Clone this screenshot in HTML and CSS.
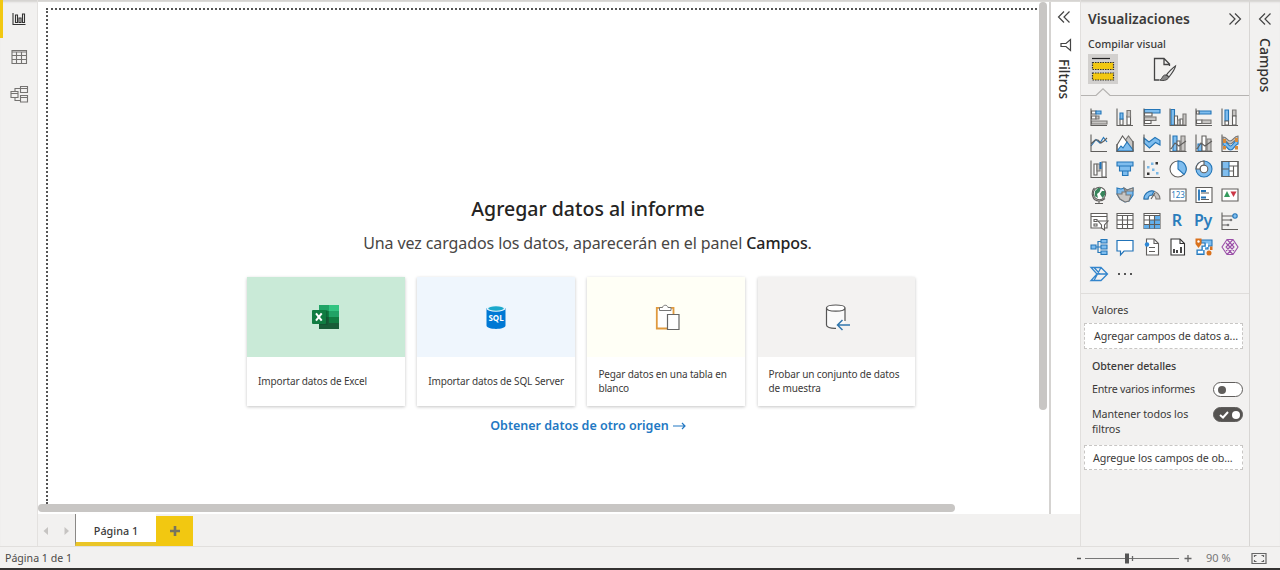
FILE: index.html
```html
<!DOCTYPE html>
<html lang="es">
<head>
<meta charset="utf-8">
<title>Informe</title>
<link rel="stylesheet" href="styles.css">
</head>
<body>
<div class="app">
  <div class="workspace">
    <nav class="views">
      <div class="view active"><svg width="20" height="20" viewBox="0 0 20 20"><path class="vk" d="M4 4V15.500H16.500M6.500 13.500V6H8.500V13.500ZM10 13.500V9H12V13.500ZM13.500 13.500V5H15.500V13.500Z"/></svg></div>
      <div class="view"><svg width="20" height="20" viewBox="0 0 20 20"><path class="vg" d="M3 3.500H17.500V16.500H3ZM3 5H17.500M3 8.500H17.500M3 12.500H17.500M7.500 5V16.500M12.500 5V16.500"/></svg></div>
      <div class="view"><svg width="20" height="20" viewBox="0 0 20 20"><path class="vg" d="M2 7.500H9V13.500H2ZM2 9.500H9M11.500 2.500H18.500V8.500H11.500ZM11.500 4.500H18.500M11.500 11.500H18.500V18H11.500ZM11.500 13.500H18.500M6 7.500V4.500H11.500M6 13.500V16.500H11.500"/></svg></div>
    </nav>
    <div class="center">
      <div class="stage">
        <main class="canvas">
          <div class="report">
            <h1>Agregar datos al informe</h1>
            <p class="lead">Una vez cargados los datos, aparecerán en el panel <b>Campos</b>.</p>
            <div class="cards">
              <div class="card"><div class="pic green"><svg width="30" height="28" viewBox="0 0 30 28">
                <rect x="8" y="2" width="10" height="6" fill="#21a366"/><rect x="18" y="2" width="10" height="6" fill="#33c481"/><rect x="8" y="8" width="10" height="6" fill="#107c41"/><rect x="18" y="8" width="10" height="6" fill="#21a366"/><rect x="8" y="14" width="10" height="6" fill="#185c37"/><rect x="18" y="14" width="10" height="6" fill="#107c41"/><rect x="8" y="20" width="20" height="6" fill="#185c37"/><rect x="8" y="7" width="8.500" height="15" fill="#0b4d2c" opacity=".45"/><rect x="1" y="7" width="14" height="14" rx="1" fill="#107c41"/><path d="M5 10.300L10.700 17.700M10.700 10.300L5 17.700" stroke="#fff" stroke-width="2"/></svg></div><div class="label">Importar datos de Excel</div></div>
              <div class="card"><div class="pic blue"><svg width="30" height="28" viewBox="0 0 30 28"><path d="M5.500 5V22.500C5.500 27 24.500 27 24.500 22.500V5Z" fill="#0078d4"/><ellipse cx="15" cy="5.500" rx="9.500" ry="3.200" fill="#e8f4fc"/><ellipse cx="15" cy="5.500" rx="7.800" ry="2.200" fill="#1aa8cc"/><text x="15" y="17.500" class="sql">SQL</text></svg></div><div class="label">Importar datos de SQL Server</div></div>
              <div class="card"><div class="pic cream"><svg width="30" height="28" viewBox="0 0 30 28"><path d="M5.800 4.800H22.500V25.500H5.800Z" fill="#fff" stroke="#e09a3e" stroke-width="1.800"/><path d="M8.500 7.500V4.500H11.500C12 1.500 16.500 1.500 17 4.500H20V7.500Z" fill="#fff" stroke="#777"/><path d="M16.500 11.500H28V26.500H16.500Z" fill="#fff" stroke="#666" stroke-width="1.200"/></svg></div><div class="label">Pegar datos en una tabla en blanco</div></div>
              <div class="card"><div class="pic gray"><svg width="30" height="28" viewBox="0 0 30 28"><path d="M5.500 5V22C5.500 24 9 25.300 14 25.500H15L24 20V5" fill="#fafafa"/><ellipse cx="14.800" cy="5.200" rx="9.300" ry="3.200" fill="#fff"/><path d="M24 18V5C24 1 5.500 1 5.500 5C5.500 9.200 24 9.200 24 5M5.500 5V22C5.500 24 9 25.500 15 25.300" fill="none" stroke="#555" stroke-width="1.200"/><path d="M29 22H16.500M21.500 17L16.500 22L21.500 27" fill="none" stroke="#3277ad" stroke-width="1.500"/></svg></div><div class="label">Probar un conjunto de datos de muestra</div></div>
            </div>
            <div class="link">Obtener datos de otro origen <svg width="13" height="8" viewBox="0 0 13 8"><path d="M0 4H12M9 1L12 4L9 7" fill="none" stroke="#2378c3" stroke-width="1.200"/></svg></div>
          </div>
          <div class="vscroll"></div>
          <div class="hscroll"></div>
        </main>
        <aside class="filters">
          <svg width="14" height="14" viewBox="0 0 14 14"><path class="ch" d="M7 1.500L1.500 7L7 12.500M12.500 1.500L7 7L12.500 12.500"/></svg>
          <svg class="funnel" width="12" height="14" viewBox="0 0 12 14"><path class="ch" d="M10.500 1.500V12.500L6 8.500H1V5.500H6Z"/></svg>
          <span class="vtext">Filtros</span>
        </aside>
      </div>
      <div class="tabs">
        <svg class="arrows" width="37" height="32" viewBox="0 0 37 32"><path d="M10 13V21L5.500 17ZM26.500 13V21L31 17Z" fill="#c6c4c2"/></svg>
        <div class="tab">Página 1</div>
        <div class="plus"><svg width="12" height="12" viewBox="0 0 12 12"><path d="M6 1V11M1 6H11" stroke="#77745f" stroke-width="2.600"/></svg></div>
      </div>
    </div>
    <aside class="vis">
      <header><h2>Visualizaciones</h2><svg width="14" height="14" viewBox="0 0 14 14"><path class="ch" d="M1.500 1.500L7 7L1.500 12.500M7 1.500L12.500 7L7 12.500"/></svg></header>
      <div class="sub">Compilar visual</div>
      <div class="modes">
        <div class="mode on"><svg width="30" height="30" viewBox="0 0 30 30"><path d="M4 4.500H22" stroke="#222" stroke-width="1.200"/><path d="M4.500 8.500H25.500V15.500H4.500ZM4.500 19H25.500V26H4.500Z" fill="#f2c811" stroke="#333" stroke-width="1.200" stroke-dasharray="1.500 1"/></svg></div>
        <div class="mode"><svg width="30" height="30" viewBox="0 0 30 30"><path d="M10 26H5.500V4.500H15L20.500 10V12M15 4.500V10.500H20.500" fill="none" stroke="#444" stroke-width="1.300"/><path d="M26.500 12C24 13.500 19 18.500 17.500 21L20 23C22 20.500 26 15.500 26.500 12Z" fill="#eee" stroke="#444" stroke-width="1.200"/><path d="M17 21C13 20.500 14 25 10.500 26C15 27.500 20 25.500 19.500 22.800Z" fill="#888" stroke="#444"/></svg></div>
      </div>
      <svg class="pointer" width="168" height="9" viewBox="0 0 168 9"><path d="M0 7.500H15L22 .8L29 7.500H168" fill="none" stroke="#b5b3b1" stroke-width="1.200"/></svg>
      <div class="gallery">
        <svg viewBox="0 0 20 20"><path class="wh" d="M2.500 4H7V7H2.500ZM2.500 9H7V12H2.500Z"/><path class="bl" d="M7 4H12V7H7Z"/><path class="gr" d="M7 9H10V12H7ZM2.500 14H18V17H2.500Z"/><path class="ln" d="M2 1.500V18.500H18"/></svg>
        <svg viewBox="0 0 20 20"><path class="wh" d="M5 12H8V18H5ZM12 9H15.500V18H12Z"/><path class="bl" d="M5 6H8V12H5Z"/><path class="gr" d="M12 3.500H15.500V10H12Z"/><path class="ln" d="M2 1.500V18.500H18"/></svg>
        <svg viewBox="0 0 20 20"><path class="bl" d="M2.500 2.500H18V6H2.500Z"/><path class="wh" d="M2.500 6H10V9H2.500Z"/><path class="gr" d="M2.500 10H14V13.500H2.500Z"/><path class="wh" d="M2.500 13.500H9V16.500H2.500Z"/><path class="ln" d="M2 1.500V18.500H18"/></svg>
        <svg viewBox="0 0 20 20"><path class="bl" d="M3 2.500H6.500V18H3Z"/><path class="wh" d="M6.500 9H9.500V18H6.500ZM12 12H15V18H12Z"/><path class="gr" d="M15 7H18V18H15ZM9.500 13H12V18H9.500Z"/><path class="ln" d="M2 1.500V18.500H18.500"/></svg>
        <svg viewBox="0 0 20 20"><path class="bl" d="M5 4H17V7H5Z"/><path class="wh" d="M2.500 4H5V7H2.500ZM2.500 13H8V16.500H2.500Z"/><path class="gr" d="M8 13H17V16.500H8Z"/><path class="ln" d="M2 1.500V18.500H18"/></svg>
        <svg viewBox="0 0 20 20"><path class="bl" d="M5 3H8.500V14H5Z"/><path class="gr" d="M12.500 3H16V9H12.500Z"/><path class="wh" d="M5 14H8.500V18H5ZM12.500 9H16V18H12.500Z"/><path class="ln" d="M2 1.500V18.500H18"/></svg>

        <svg viewBox="0 0 20 20"><path class="lb" d="M2 13L7 6.500L11 10L14.500 4.500L18 9"/><path class="ln" d="M2 11L6 7H9L12 10L15 8L18 5M2 1.500V18.500H18"/></svg>
        <svg viewBox="0 0 20 20"><path class="gr" d="M9 9L13.500 3L18 9V18H9Z"/><path class="wh" d="M2 12L7.500 3L12 9V18H2Z"/><path class="bl" d="M2 18L6 13L8 15L12 9L18 17V18Z"/><path class="ln" d="M2 11V18.500H18V8"/></svg>
        <svg viewBox="0 0 20 20"><path class="bl" d="M2 5L7 9L13 4.500L18 7.500V12L13.500 9.500L7.500 15L2 10Z"/><path class="ln" d="M2 1.500V18.500H18"/></svg>
        <svg viewBox="0 0 20 20"><path class="bl" d="M5 3H9V18H5Z"/><path class="wh" d="M9 8H12V18H9Z"/><path class="gr" d="M13 3H17V18H13Z"/><path class="ln" d="M2 1.500V18.500H18.500M3 16L7 10L11 13L18 8"/></svg>
        <svg viewBox="0 0 20 20"><path class="bl" d="M4 11H8V18H4Z"/><path class="wh" d="M8 3H12V18H8Z"/><path class="gr" d="M13 6H17V18H13Z"/><path class="ln" d="M2 1.500V18.500H18.500M3 16L7 10L11 13L18 8"/></svg>
        <svg viewBox="0 0 20 20"><path class="gr" d="M3 4C7 4 7 8 10 8S14 3 18 3V6C14 6 13 11 10 11S7 7 3 7Z"/><path class="bl" d="M3 8C7 8 8 13 10.500 13S14 7 18 7V11C15 11 14 17 10.500 17S7 12 3 12Z"/><path fill="#d88b3b" d="M3 6H6V10H3ZM15 5H18V9H15ZM3 13H6V16.500H3ZM15 13H18V16.500H15Z"/><path class="ln" d="M2 1.500V18.500H18"/></svg>

        <svg viewBox="0 0 20 20"><path class="wh" d="M5 5H8V16H5ZM13 3H17V18H13Z"/><path class="gr" d="M8 5H11V12H8Z"/><path class="ln" d="M2 1.500V18.500H18"/><path d="M11.500 3V10" stroke="#2173b8" stroke-width="2"/></svg>
        <svg viewBox="0 0 20 20"><path class="bl" d="M2 3H18V7H2ZM4.500 7H15.500V12H4.500ZM7.500 12H13V16.500H7.500Z"/></svg>
        <svg viewBox="0 0 20 20"><path class="ln" d="M2 1.500V18.500H18"/><path fill="#333" d="M13.500 3H16V5.500H13.500ZM5 13.500H7.500V16H5Z"/><path fill="#7ab8e6" d="M9 3.500H11.500V6H9ZM5 7H7.500V9.500H5ZM10 9.500H12.500V12H10ZM14 13H16.500V15.500H14Z"/></svg>
        <svg viewBox="0 0 20 20"><circle class="wh" cx="10" cy="10" r="8"/><path class="bl" d="M10 2A8 8 0 0 1 16 15.500L10 10Z"/></svg>
        <svg viewBox="0 0 20 20"><circle class="bl" cx="10" cy="10" r="8"/><path class="wh" d="M2 10A8 8 0 0 1 10 2V6A4 4 0 0 0 6 10Z"/><circle class="wh" cx="10" cy="10" r="3.800"/></svg>
        <svg viewBox="0 0 20 20"><path class="wh" d="M2 2.500H18V17.500H2Z"/><path class="bl" d="M2 2.500H9V17.500H2Z"/><path class="ln" d="M2 10H9M9 7H18M9 12H13.500M13.500 7V17.500M2 2.500H18V17.500H2Z"/></svg>

        <svg viewBox="0 0 20 20"><circle class="wh" cx="10.500" cy="8.500" r="6.200"/><path d="M6 6L9 3H12L10.500 7L8 9L9 13L5.500 11ZM13 6L16 6V10L13.500 13L11 9Z" fill="#37845b"/><path class="ln" d="M5.500 3C1.500 7 3 16 10 16C13 16 14.500 15 16 13.500M10 16V18.500M6 18.500H14"/></svg>
        <svg viewBox="0 0 20 20"><path class="bl" d="M2 3L6 4L9 3L12 5L18 3V10L14 16L10 17L5 14L2 9Z"/><path class="gr" d="M2 9H7V7H11V10H16L14 16L10 17L5 14ZM9 3L12 5L18 3V6H10Z"/></svg>
        <svg viewBox="0 0 20 20"><path class="gr" d="M2 14A8 8 0 0 1 18 14H14A4 4 0 0 0 6 14Z"/><path class="bl" d="M2 14A8 8 0 0 1 12 6.200L10 10A4 4 0 0 0 6 14Z"/><path class="ln" d="M9 14L13 8"/></svg>
        <svg viewBox="0 0 20 20"><path class="wh" d="M2 4H18V16H2Z"/><text class="num" x="10" y="13">123</text></svg>
        <svg viewBox="0 0 20 20"><path class="wh" d="M2 2.500H18V17.500H2Z"/><path d="M5 4.500V15.500M7 6H12M7 12.500H12" stroke="#2173b8" stroke-width="1.800"/><path class="ln" d="M7 8H15M7 14.500H15"/></svg>
        <svg viewBox="0 0 20 20"><path class="wh" d="M2 4H18V16H2Z"/><path fill="#349b5e" d="M4 12L7 6L10 12Z"/><path fill="#cc3646" d="M10.500 6.500H16.500L13.500 12Z"/></svg>

        <svg viewBox="0 0 20 20"><path class="wh" d="M2 2.500H18V17H2Z"/><path class="ln" d="M2 5.500H18M5 8.500H8V10.500H5ZM5 13H8V15H5Z"/><path class="wh" d="M9 10H19L15.500 14V19L12.500 17V14Z"/></svg>
        <svg viewBox="0 0 20 20"><path class="wh" d="M2 2.500H18V17.500H2Z"/><path class="ln" d="M2 4.500H18M2 9H18M2 13.500H18M7.500 4V17.500M12.500 4V17.500"/></svg>
        <svg viewBox="0 0 20 20"><path class="wh" d="M2 2.500H18V17.500H2Z"/><path fill="#62b0ed" d="M12.500 5H18V17.500H7.500V9H12.500ZM2 13.500H7.500V17.500H2Z"/><path class="ln" d="M2 4.500H18M2 9H18M2 13.500H18M7.500 4V17.500M12.500 4V17.500"/></svg>
        <span class="glyph">R</span>
        <span class="glyph">Py</span>
        <svg viewBox="0 0 20 20"><path class="ln" d="M2 1.500V18.500H18M2 5H13M2 9H10M2 14H8"/><circle cx="15" cy="5" r="2.200" class="bl"/><circle cx="11" cy="9" r="1.300" fill="#777"/><circle cx="8" cy="14" r="1.300" fill="#777"/></svg>

        <svg viewBox="0 0 20 20"><path class="lb" d="M7 10H12M9 10V4.500H12M9 10V15.500H12"/><path class="bl" d="M2 8H7V12H2ZM12 2.500H18V6H12ZM12 8H18V12H12ZM12 14H18V17.500H12Z"/></svg>
        <svg viewBox="0 0 20 20"><path d="M2 3.500H18V14H9L5.500 18V14H2Z" fill="#fff" stroke="#2173b8" stroke-width="1.200"/></svg>
        <svg viewBox="0 0 20 20"><path class="wh" d="M4.500 2H12L16.500 6.500V18H4.500Z"/><path class="ln" d="M12 2V6.500H16.500M7 10.500H13M7 14.500H13"/><circle cx="5" cy="7.500" r="2.200" fill="#2b88d8"/></svg>
        <svg viewBox="0 0 20 20"><path class="wh dk" d="M3 2H12L16.500 6.500V18H3Z"/><path d="M6 16V12M9 16V13M13 16V10" stroke="#333" stroke-width="1.800"/><path class="ln dk" d="M12 2V6.500H16.500"/></svg>
        <svg viewBox="0 0 20 20"><path class="bl" d="M7 3H18V9H14V12H10V17.500H3V13H8V9H11V6H7Z"/><path fill="#fff" d="M4 14H9V10H12V6.500H14V10H11V13H9V16H4Z"/><path fill="#d9711c" d="M1.500 1.500H7.500V7L4.500 11L1.500 7ZM16 9.500H18.500V13H16Z"/><circle cx="15" cy="16" r="2.500" fill="#d9711c"/><circle cx="4.500" cy="4.500" r="1.200" fill="#fff"/></svg>
        <svg viewBox="0 0 20 20"><path d="M7 2.500H13L18 10L13 17.500H7L2 10ZM6 6L14 14M14 6L6 14M7 2.500L14 10L7 17.500M13 2.500L6 10L13 17.500" fill="none" stroke="#9b4fa8" stroke-width="1.100"/></svg>

        <svg viewBox="0 0 20 20"><path d="M2 3.500H12L18.500 10L12 16.500H2L8 10ZM5 3.500L11 10M8 10H18M12 3.500L5 16.500" fill="none" stroke="#3385cc" stroke-width="1.300"/></svg>
        <svg viewBox="0 0 20 20"><path fill="#555" d="M3 9H5V11H3ZM9 9H11V11H9ZM15 9H17V11H15Z"/></svg>
      </div>
      <div class="fields">
        <div class="cap">Valores</div>
        <div class="well">Agregar campos de datos a...</div>
        <div class="cap second">Obtener detalles</div>
        <div class="option one"><span>Entre varios informes</span><span class="toggle"></span></div>
        <div class="option two"><span>Mantener todos los filtros</span><span class="toggle checked"><svg width="10" height="8" viewBox="0 0 10 8"><path d="M1 4L4 6.500L9 1" fill="none" stroke="#fff" stroke-width="2"/></svg></span></div>
        <div class="well last">Agregue los campos de ob...</div>
      </div>
    </aside>
    <aside class="campos">
      <svg width="14" height="14" viewBox="0 0 14 14"><path class="ch" d="M7 1.500L1.500 7L7 12.500M12.500 1.500L7 7L12.500 12.500"/></svg>
      <span class="vtext">Campos</span>
    </aside>
  </div>
  <footer class="status">
    <span class="pages">Página 1 de 1</span>
    <div class="zoom">
      <svg width="116" height="14" viewBox="0 0 116 14"><path d="M1 7.500H5" stroke="#555" stroke-width="1.500"/><path d="M9 7.500H103" stroke="#777"/><path d="M49 2.500H53V12.500H49Z" fill="#555"/><path d="M56.500 5V10M112 4V11M108.500 7.500H115.500" stroke="#666" stroke-width="1.300"/></svg>
      <span class="pct">90 %</span>
      <svg width="16" height="14" viewBox="0 0 16 14"><path d="M1 2.500H15V12.500H1ZM3.500 6V4.500H5.500M10.500 4.500H12.500V6M3.500 9V10.500H5.500M10.500 10.500H12.500V9" fill="none" stroke="#666" stroke-width="1.200"/></svg>
    </div>
  </footer>
</div>
</body>
</html>
```
FILE: styles.css
```css
* { box-sizing: border-box; }
body { margin: 0; font-family: "Noto Sans", "Open Sans", sans-serif; color: #3b3a39; }
svg { display: block; flex: none; }
h1, h2, p { margin: 0; }
.app { width: 1280px; height: 570px; background: #f2f1f0; border-bottom: 2px solid #343231; display: flex; flex-direction: column; overflow: hidden; }
.workspace { height: 546px; display: flex; box-shadow: inset 0 3px 2px -1px #d4d2d0; }
.views { width: 38px; border-right: 1px solid #e3e1df; }
.view { height: 37.500px; padding: 9px 0 0 9px; }
.view.active { border-left: 3px solid #f2c811; padding-left: 6px; }
.vk, .vg { fill: none; stroke: #333; stroke-width: 1.100; }
.vg { stroke: #757371; }
.center { width: 1042px; }
.stage { height: 514px; padding-top: 2px; display: flex; }
.canvas { width: 1011px; background: #fff; padding: 6px 0 0 8px; position: relative; }
.report { width: 991px; height: 496px; border-top: 2px dotted #555; border-left: 2px dotted #555; padding: 183px 0 0 199px; }
h1 { width: 682px; text-align: center; font-size: 19.500px; line-height: 32px; font-weight: 500; color: #252423; white-space: nowrap; }
.lead { width: 681px; text-align: center; font-size: 16px; line-height: 24px; letter-spacing: -.1px; margin-top: 6px; white-space: nowrap; color: #484644; }
.lead b { font-weight: 500; color: #252423; }
.cards { display: flex; gap: 12.500px; margin-top: 22px; }
.card { width: 157.700px; height: 129px; background: #fff; box-shadow: 0 1px 3px rgba(0,0,0,.23); display: flex; flex-direction: column; }
.pic { height: 80px; display: grid; place-items: center; }
.green { background: #c9ead7; }
.blue { background: #eff6fd; }
.cream { background: #fffff6; }
.gray { background: #f3f2f1; }
.label { flex: 1; display: flex; align-items: center; padding: 0 6px 1px 11px; font-size: 10px; line-height: 14px; letter-spacing: -.13px; }
.sql { font-size: 8px; font-weight: 700; fill: #fff; text-anchor: middle; }
.link { width: 682px; display: flex; justify-content: center; align-items: center; gap: 4px; margin-top: 11px; font-size: 12.500px; line-height: 18px; font-weight: 600; color: #2378c3; }
.vscroll, .hscroll { position: absolute; background: #c8c6c4; border-radius: 4px; }
.vscroll { right: 2px; top: 0; width: 8px; height: 408px; }
.hscroll { left: 0; bottom: 2px; width: 917px; height: 8px; }
.filters { width: 31px; border-left: 2px solid #d5d3d1; background: #fff; display: flex; flex-direction: column; align-items: center; padding: 8px 3px 0 0; }
.funnel { margin: 14px 0 0 3px; }
.ch { fill: none; stroke: #444; stroke-width: 1.200; }
.vtext { writing-mode: vertical-rl; font-size: 13.600px; font-weight: 500; line-height: 16px; color: #323130; }
.filters .vtext { margin-top: 7px; }
.tabs { height: 32px; display: flex; }
.tab { width: 81px; height: 32px; background: #fff; border-left: 1px solid #8a8886; border-bottom: 4px solid #eac527; text-align: center; font-size: 10.800px; font-weight: 500; line-height: 33px; }
.plus { width: 37px; height: 30px; margin-top: 2px; background: #f2c811; display: grid; place-items: center; }
.vis { width: 170px; border-left: 1px solid #e1dfdd; border-right: 1px solid #d8d6d4; }
.vis header { display: flex; align-items: center; justify-content: space-between; padding: 7px 7px 0 7px; height: 31px; }
h2 { font-size: 13.800px; line-height: 22px; font-weight: 600; }
.sub { padding-left: 7px; margin-top: 5px; font-size: 10.600px; line-height: 16px; font-weight: 500; }
.modes { display: flex; gap: 31px; padding: 2px 0 0 7px; }
.mode { width: 30px; height: 30px; }
.mode.on { background: #d2d0ce; }
.pointer { margin-top: 4px; }
.gallery { display: grid; grid-template-columns: repeat(6, 26.250px); grid-auto-rows: 26.100px; padding: 10px 0 0 8px; height: 197px; border-bottom: 1px solid #dfdddb; }
.gallery svg { width: 20px; height: 20px; }
.ln, .wh, .gr { stroke: #605e5c; stroke-width: 1.100; fill: none; }
.wh { fill: #fff; }
.gr { fill: #c8c6c4; stroke: #797775; }
.bl { fill: #7fbdee; stroke: #2476b8; stroke-width: 1.100; }
.lb { fill: none; stroke: #2476b8; stroke-width: 1.200; }
.dk { stroke: #333; }
.num { font-size: 8px; fill: #2b7dbc; text-anchor: middle; }
.glyph { width: 18px; font-size: 16px; line-height: 19px; letter-spacing: -.4px; font-weight: 600; color: #2b7dbc; text-align: center; }
.fields { padding: 8px 6px 0 3px; font-size: 10.700px; line-height: 15px; letter-spacing: -.08px; }
.cap { padding-left: 8px; line-height: 16px; }
.well { height: 26px; margin-top: 5px; padding: 0 4px 0 9px; border: 1px dashed #c8c6c4; background: #fff; line-height: 25px; white-space: nowrap; }
.second { margin-top: 9px; font-weight: 500; }
.option { display: flex; justify-content: space-between; padding-left: 8px; }
.one { margin-top: 8px; height: 25px; }
.two { height: 30px; }
.one span:first-child { letter-spacing: -.22px; }
.two span:first-child { width: 110px; }
.toggle { width: 30px; height: 15px; border: 1px solid #605e5c; border-radius: 8px; background: #fff; display: flex; align-items: center; }
.toggle::after { content: ""; width: 8px; height: 8px; border-radius: 50%; background: #605e5c; margin-left: 4px; }
.checked { background: #555351; padding-left: 5px; }
.checked::after { background: #fff; margin-left: 3px; }
.last { margin-top: 8px; height: 25px; padding-left: 8px; }
.campos { width: 30px; display: flex; flex-direction: column; align-items: center; padding-top: 12px; }
.campos .vtext { margin-top: 12px; font-size: 14px; }
.status { height: 22px; border-top: 1px solid #e1dfdd; display: flex; justify-content: space-between; align-items: center; padding: 0 13px 0 5px; font-size: 10.600px; color: #4b4947; }
.zoom { display: flex; align-items: center; }
.pct { width: 45px; margin-left: 14px; font-size: 11px; color: #777; }
```
